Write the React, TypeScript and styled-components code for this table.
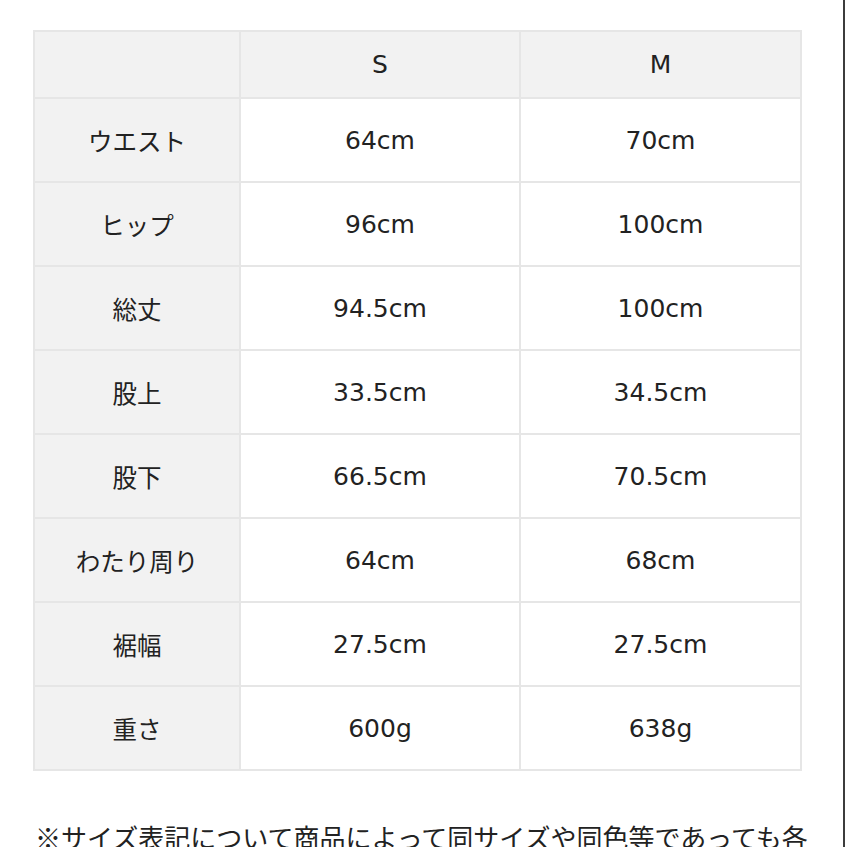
import React from "react";
import styled, { createGlobalStyle } from "styled-components";

const GlobalStyle = createGlobalStyle`
  html, body {
    margin: 0;
    padding: 0;
    background: #fff;
  }
  body {
    font-family: "Noto Sans CJK JP", "Noto Sans", sans-serif;
    color: #222;
  }
`;

const Page = styled.div`
  width: 845px;
  height: 847px;
  overflow: hidden;
  border-right: 2px solid #3c3c3c;
  padding: 30px 0 0 33px;
  box-sizing: border-box;
  background: #fff;
`;

const Table = styled.table`
  width: 767px;
  table-layout: fixed;
  border-collapse: collapse;

  col:nth-child(1) {
    width: 206px;
  }
  col:nth-child(2) {
    width: 280px;
  }
  col:nth-child(3) {
    width: 281px;
  }
`;

const Cell = styled.td<{ $shade?: boolean }>`
  height: 82px;
  padding: 0;
  border: 2px solid #e6e6e6;
  background: ${(p) => (p.$shade ? "#f2f2f2" : "#fff")};
  text-align: center;
  vertical-align: middle;
  color: #222;
  font-weight: 400;
`;

const Label = styled(Cell)`
  font-family: "Noto Sans CJK JP", sans-serif;
  font-size: 24.5px;
`;

const Value = styled(Cell)`
  font-family: "DejaVu Sans", "Noto Sans CJK JP", sans-serif;
  font-size: 25px;
`;

const Head = styled(Value).attrs({ as: "th" })`
  height: 65px;
  background: #f2f2f2;
`;

const Note = styled.p`
  margin: 46px 0 0 2px;
  font-family: "Noto Sans CJK JP", sans-serif;
  font-size: 26px;
  line-height: 40px;
  white-space: nowrap;
  color: #222;
`;

const rows: [string, string, string][] = [
  ["ウエスト", "64cm", "70cm"],
  ["ヒップ", "96cm", "100cm"],
  ["総丈", "94.5cm", "100cm"],
  ["股上", "33.5cm", "34.5cm"],
  ["股下", "66.5cm", "70.5cm"],
  ["わたり周り", "64cm", "68cm"],
  ["裾幅", "27.5cm", "27.5cm"],
  ["重さ", "600g", "638g"],
];

export default function App() {
  return (
    <>
      <GlobalStyle />
      <Page>
        <Table>
          <colgroup>
            <col />
            <col />
            <col />
          </colgroup>
          <thead>
            <tr>
              <Head />
              <Head>S</Head>
              <Head>M</Head>
            </tr>
          </thead>
          <tbody>
            {rows.map(([name, s, m]) => (
              <tr key={name}>
                <Label $shade>{name}</Label>
                <Value>{s}</Value>
                <Value>{m}</Value>
              </tr>
            ))}
          </tbody>
        </Table>
        <Note>※サイズ表記について商品によって同サイズや同色等であっても各</Note>
      </Page>
    </>
  );
}
